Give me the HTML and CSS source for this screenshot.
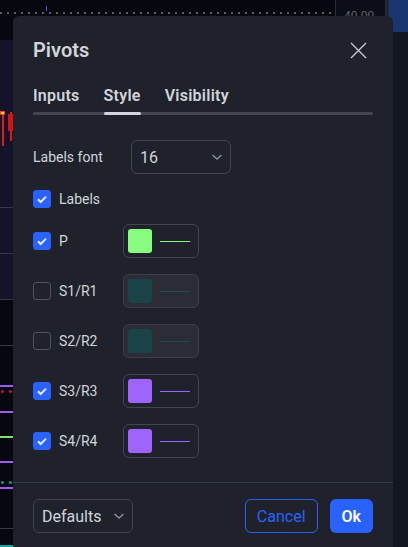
FILE: index.html
```html
<!DOCTYPE html>
<html lang="en">
<head>
<meta charset="utf-8">
<title>Pivots</title>
<link rel="stylesheet" href="styles.css">
</head>
<body>
<div class="screen">
  <div class="chart">
    <div class="dots"></div>
    <div class="tick"></div>
    <div class="pane-hi"></div>
    <div class="hline" style="top:207px"></div>
    <div class="hline" style="top:253px"></div>
    <div class="hline" style="top:299px"></div>
    <div class="hline" style="top:345px"></div>
    <div class="hline" style="top:528px"></div>
    <div class="wick" style="left:2px;top:111px;height:35px"></div>
    <div class="cbox"></div>
    <div class="wick" style="left:10px;top:112px;height:29px"></div>
    <div class="cbody"></div>
    <div class="plot purple" style="top:385px"></div>
    <div class="dot red" style="left:1px;top:390px"></div>
    <div class="dot red" style="left:9px;top:390px"></div>
    <div class="plot purple" style="top:411px"></div>
    <div class="plot green" style="top:436px"></div>
    <div class="plot purple" style="top:461px"></div>
    <div class="dot teal" style="left:1px;top:481px"></div>
    <div class="dot teal" style="left:9px;top:481px"></div>
    <div class="plot purple" style="top:487px"></div>
    <div class="plot teal" style="top:545px"></div>
  </div>
  <div class="axis"><span class="axis-label">40.00</span></div>
  <div class="divider"></div>
  <div class="side"><div class="side-top"></div></div>
</div>

<div class="dialog">
  <div class="header">
    <div class="title">Pivots</div>
    <svg class="close" width="17" height="17" viewBox="0 0 17 17"><path d="M1 1L16 16M16 1L1 16" stroke="#c5c8d0" stroke-width="1.4" fill="none"/></svg>
  </div>
  <div class="tabs">
    <div class="tab">Inputs</div>
    <div class="tab active">Style</div>
    <div class="tab">Visibility</div>
  </div>
  <div class="content">
    <div class="row">
      <div class="field-label">Labels font</div>
      <div class="select"><span>16</span>
        <svg width="12" height="8" viewBox="0 0 12 8"><path d="M1.5 2L6 6L10.5 2" stroke="#8a8d96" stroke-width="1.5" fill="none"/></svg>
      </div>
    </div>
    <div class="row">
      <div class="check on"><svg width="18" height="18" viewBox="0 0 18 18"><path d="M5 9.3L7.7 12L13 6.6" stroke="#e6e8ee" stroke-width="2" fill="none"/></svg></div>
      <div class="check-label">Labels</div>
    </div>
    <div class="color-rows">
      <div class="row">
        <div class="cell">
          <div class="check on"><svg width="18" height="18" viewBox="0 0 18 18"><path d="M5 9.3L7.7 12L13 6.6" stroke="#e6e8ee" stroke-width="2" fill="none"/></svg></div>
          <div class="check-label">P</div>
        </div>
        <div class="color-btn"><div class="swatch green-c"></div><div class="line green-c"></div></div>
      </div>
      <div class="row">
        <div class="cell">
          <div class="check"></div>
          <div class="check-label">S1/R1</div>
        </div>
        <div class="color-btn disabled"><div class="swatch teal-c"></div><div class="line teal-c"></div></div>
      </div>
      <div class="row">
        <div class="cell">
          <div class="check"></div>
          <div class="check-label">S2/R2</div>
        </div>
        <div class="color-btn disabled"><div class="swatch teal-c"></div><div class="line teal-c"></div></div>
      </div>
      <div class="row">
        <div class="cell">
          <div class="check on"><svg width="18" height="18" viewBox="0 0 18 18"><path d="M5 9.3L7.7 12L13 6.6" stroke="#e6e8ee" stroke-width="2" fill="none"/></svg></div>
          <div class="check-label">S3/R3</div>
        </div>
        <div class="color-btn"><div class="swatch purple-c"></div><div class="line purple-c"></div></div>
      </div>
      <div class="row">
        <div class="cell">
          <div class="check on"><svg width="18" height="18" viewBox="0 0 18 18"><path d="M5 9.3L7.7 12L13 6.6" stroke="#e6e8ee" stroke-width="2" fill="none"/></svg></div>
          <div class="check-label">S4/R4</div>
        </div>
        <div class="color-btn"><div class="swatch purple-c"></div><div class="line purple-c"></div></div>
      </div>
    </div>
  </div>
  <div class="footer">
    <div class="defaults"><span>Defaults</span>
      <svg width="12" height="8" viewBox="0 0 12 8"><path d="M1.5 2L6 6L10.5 2" stroke="#8a8d96" stroke-width="1.5" fill="none"/></svg>
    </div>
    <div class="spacer"></div>
    <div class="btn cancel">Cancel</div>
    <div class="btn ok">Ok</div>
  </div>
</div>
</body>
</html>
```

FILE: styles.css
```css
* { box-sizing: border-box; }
html, body { margin: 0; padding: 0; }
body {
  width: 408px;
  height: 547px;
  overflow: hidden;
  position: relative;
  background: #0c0e17;
  font-family: Roboto, "Liberation Sans", sans-serif;
  color: #d1d4dc;
}
.screen {
  display: flex;
  height: 547px;
}
.chart {
  position: relative;
  width: 336px;
  background: #07070f;
  border-right: 1px solid #2a2e39;
  overflow: hidden;
}
.dots {
  position: absolute;
  left: 0; right: 0; top: 12px;
  height: 2px;
  background: repeating-linear-gradient(90deg, #5d606b 0 2px, transparent 2px 7px);
}
.tick {
  position: absolute;
  left: 46px; top: 6px;
  width: 1px; height: 5px;
  background: #7b3ff2;
}
.pane-hi {
  position: absolute;
  left: -20px; top: 40px;
  width: 360px; height: 259px;
  background: #14132a;
  border-top-right-radius: 40px;
}
.hline {
  position: absolute;
  left: 0; right: 0;
  height: 1px;
  background: #363a45;
}
.wick {
  position: absolute;
  width: 2px;
  background: #e01b1b;
}
.cbox {
  position: absolute;
  left: 0; top: 111px;
  width: 5px; height: 4px;
  background: #ffd23a;
  border: 1px solid #f23f1f;
}
.cbody {
  position: absolute;
  left: 8px; top: 114px;
  width: 5px; height: 17px;
  background: #d41414;
}
.plot {
  position: absolute;
  left: 0; right: 0;
  height: 2px;
}
.plot.purple { background: #9c5cf5; }
.plot.green { background: #7ee07a; }
.plot.teal { background: #17a3a3; }
.dot {
  position: absolute;
  width: 3px; height: 3px;
  border-radius: 50%;
}
.dot.red { background: #d5121c; }
.dot.teal { background: #0c9c8c; }
.axis {
  width: 49px;
  background: #0c0e17;
  padding: 5px 0 0 8px;
}
.axis-label {
  font-size: 12px;
  line-height: 14px;
  color: #5d606b;
}
.divider {
  width: 4px;
  background: #22262f;
}
.side {
  flex: 1;
  background: #131722;
}
.side-top {
  height: 32px;
  background: #1a3670;
}

/* dialog */
.dialog {
  position: absolute;
  left: 13px;
  top: 16px;
  width: 380px;
  height: 545px;
  background: #1f222b;
  border-radius: 6px;
  display: flex;
  flex-direction: column;
}
.header {
  display: flex;
  align-items: center;
  justify-content: space-between;
  padding: 20px 26px 0 20px;
  height: 48px;
}
.title {
  font-size: 20px;
  line-height: 28px;
  font-weight: 600;
  color: #d1d4dc;
}
.close { display: block; }
.tabs {
  position: relative;
  display: flex;
  gap: 24px;
  margin: 20px 20px 0;
  padding-bottom: 7px;
}
.tabs::after {
  content: "";
  position: absolute;
  left: 0; right: 0; bottom: 0;
  height: 3px;
  border-radius: 2px;
  background: #434651;
}
.tab {
  position: relative;
  font-size: 16px;
  line-height: 24px;
  font-weight: 600;
  letter-spacing: 0.25px;
  color: #d1d4dc;
}
.tab.active::after {
  content: "";
  position: absolute;
  left: 0; right: 0; bottom: -7px;
  height: 3px;
  border-radius: 2px;
  background: #d1d4dc;
  z-index: 1;
}
.content {
  display: flex;
  flex-direction: column;
  gap: 8px;
  padding: 25px 20px 24px;
}
.color-rows {
  display: flex;
  flex-direction: column;
  gap: 16px;
}
.row {
  display: flex;
  align-items: center;
  height: 34px;
}
.field-label {
  width: 98px;
  font-size: 14px;
  color: #d1d4dc;
}
.select {
  width: 100px;
  height: 34px;
  border: 1px solid #434651;
  border-radius: 6px;
  display: flex;
  align-items: center;
  justify-content: space-between;
  padding: 0 7px 0 8px;
  font-size: 16px;
  color: #d1d4dc;
}
.select svg, .defaults svg { display: block; }
.cell {
  width: 90px;
  display: flex;
  align-items: center;
}
.check {
  width: 18px;
  height: 18px;
  border-radius: 3px;
  border: 1px solid #50535e;
  flex: none;
}
.check.on {
  background: #2962ff;
  border-color: #2962ff;
}
.check svg { display: block; margin: -1px; }
.check-label {
  margin-left: 8px;
  font-size: 14px;
  color: #d1d4dc;
}
.color-btn {
  width: 76px;
  height: 34px;
  border: 1px solid #434651;
  border-radius: 6px;
  display: flex;
  align-items: center;
  padding: 0 4px;
}
.color-btn.disabled {
  background: #2a2d37;
  border-color: #3b3e48;
}
.swatch {
  width: 24px;
  height: 24px;
  border-radius: 3px;
}
.line {
  width: 30px;
  height: 1px;
  margin-left: 8px;
}
.green-c { background: #88fe80; }
.purple-c { background: #9f63ff; }
.teal-c { background: #1a4447; }
.line.teal-c { background: #1e4c4f; }
.footer {
  border-top: 1px solid #363a45;
  display: flex;
  align-items: center;
  gap: 12px;
  padding: 16px 20px 0;
}
.defaults {
  width: 100px;
  height: 34px;
  border: 1px solid #434651;
  border-radius: 6px;
  display: flex;
  align-items: center;
  justify-content: space-between;
  padding: 0 7px 0 8px;
  font-size: 16px;
  color: #d1d4dc;
}
.spacer { flex: 1; }
.btn {
  height: 34px;
  border-radius: 6px;
  display: flex;
  align-items: center;
  padding: 0 11px;
  font-size: 16px;
}
.cancel {
  border: 1px solid #2962ff;
  color: #2962ff;
}
.ok {
  padding: 0 12px;
  background: #2962ff;
  color: #ffffff;
  font-weight: 600;
}
```
